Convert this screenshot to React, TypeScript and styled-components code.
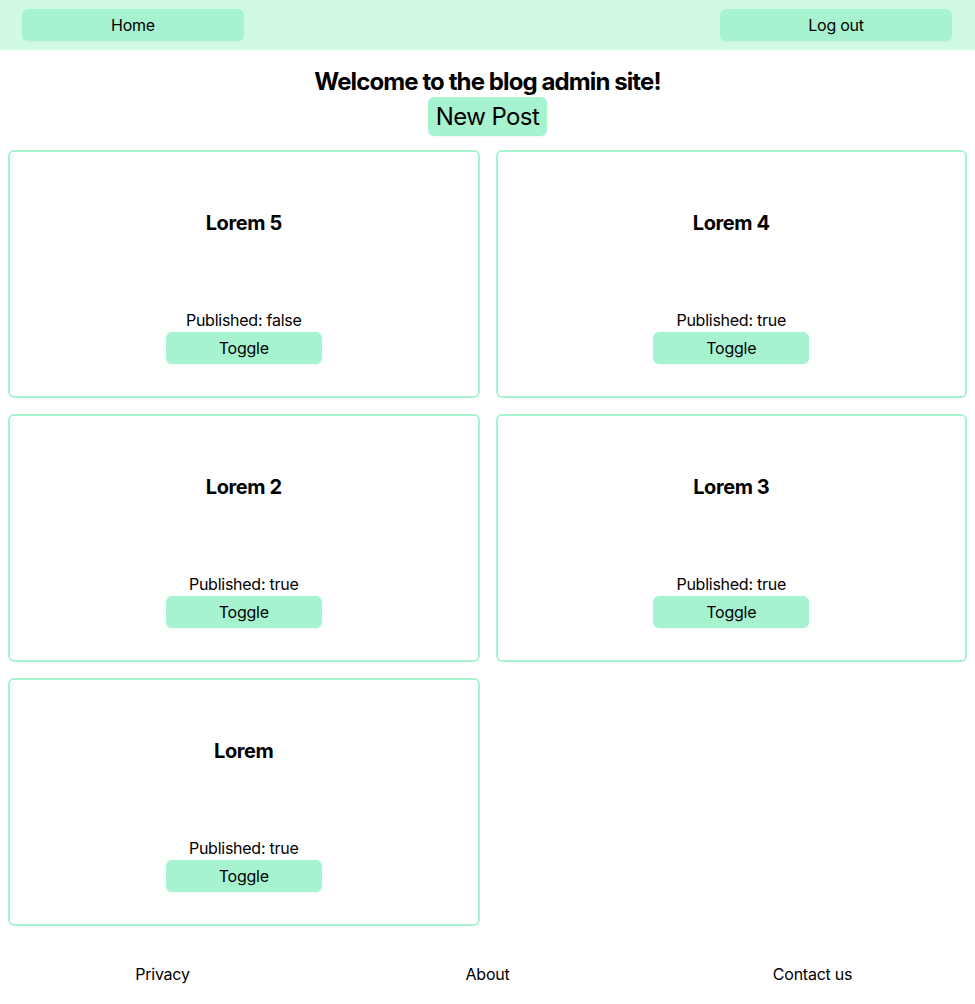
import React from "react"
import styled, { createGlobalStyle } from "styled-components"

const colors = {
  light: "#d1fae5",
  accent: "#a7f3d0",
  text: "#000000",
}

const GlobalStyles = createGlobalStyle`
  html {
    box-sizing: border-box;
  }
  *,
  *:before,
  *:after {
    box-sizing: inherit;
  }
  body {
    margin: 0;
    font-family: Inter, "Noto Sans", sans-serif;
    letter-spacing: -0.25px;
    color: ${colors.text};
    background-color: white;
  }
`

const Header = styled.header`
  height: 50px;
  background-color: ${colors.light};
  display: flex;
  justify-content: space-between;
  align-items: flex-start;
  padding: 9px 23px 0 22px;
`

const Button = styled.button<{ $width?: number; $big?: boolean }>`
  border: none;
  background-color: ${colors.accent};
  border-radius: 6px;
  font-family: inherit;
  letter-spacing: ${(p) => (p.$big ? "-0.6px" : "-0.25px")};
  color: black;
  cursor: pointer;
  box-shadow: 0 1px 2px rgba(0, 0, 0, 0.04);
  width: ${(p) => (p.$width ? `${p.$width}px` : "auto")};
  height: ${(p) => (p.$big ? "39px" : "32px")};
  font-size: ${(p) => (p.$big ? "24px" : "16px")};
  padding: ${(p) => (p.$big ? "0 8px" : "0")};
`

const Main = styled.main`
  padding: 0 8px;
`

const Intro = styled.section`
  display: flex;
  flex-direction: column;
  align-items: center;
  padding-top: 17px;
`

const Title = styled.h1`
  margin: 0 0 1px;
  font-size: 24px;
  line-height: 29px;
  font-weight: 700;
  letter-spacing: -0.9px;
`

const PostGrid = styled.div`
  display: grid;
  grid-template-columns: 1fr 1fr;
  gap: 16px;
  margin-top: 14px;
`

const Card = styled.article`
  height: 248px;
  border: 2px solid ${colors.accent};
  border-radius: 6px;
  display: flex;
  flex-direction: column;
  justify-content: space-between;
  align-items: center;
  padding: 59px 0 32px;
`

const CardTitle = styled.h2`
  margin: 0;
  font-size: 20px;
  line-height: 24px;
  font-weight: 700;
  letter-spacing: -0.4px;
`

const CardFooter = styled.div`
  display: flex;
  flex-direction: column;
  align-items: center;
`

const Status = styled.p`
  margin: 0;
  font-size: 16px;
  line-height: 20px;
  padding-bottom: 2px;
`

const Footer = styled.footer`
  display: grid;
  grid-template-columns: repeat(3, 1fr);
  margin-top: 39px;
  padding-bottom: 20px;
`

const FooterLink = styled.a`
  text-align: center;
  font-size: 16px;
  line-height: 19px;
  color: black;
  text-decoration: none;
`

const posts = [
  { title: "Lorem 5", published: false },
  { title: "Lorem 4", published: true },
  { title: "Lorem 2", published: true },
  { title: "Lorem 3", published: true },
  { title: "Lorem", published: true },
]

const App = () => (
  <>
    <GlobalStyles />
    <Header>
      <Button $width={222}>Home</Button>
      <Button $width={232}>Log out</Button>
    </Header>
    <Main>
      <Intro>
        <Title>Welcome to the blog admin site!</Title>
        <Button $big>New Post</Button>
      </Intro>
      <PostGrid>
        {posts.map((post) => (
          <Card key={post.title}>
            <CardTitle>{post.title}</CardTitle>
            <CardFooter>
              <Status>Published: {String(post.published)}</Status>
              <Button $width={156}>Toggle</Button>
            </CardFooter>
          </Card>
        ))}
      </PostGrid>
    </Main>
    <Footer>
      <FooterLink href="#">Privacy</FooterLink>
      <FooterLink href="#">About</FooterLink>
      <FooterLink href="#">Contact us</FooterLink>
    </Footer>
  </>
)

export default App
